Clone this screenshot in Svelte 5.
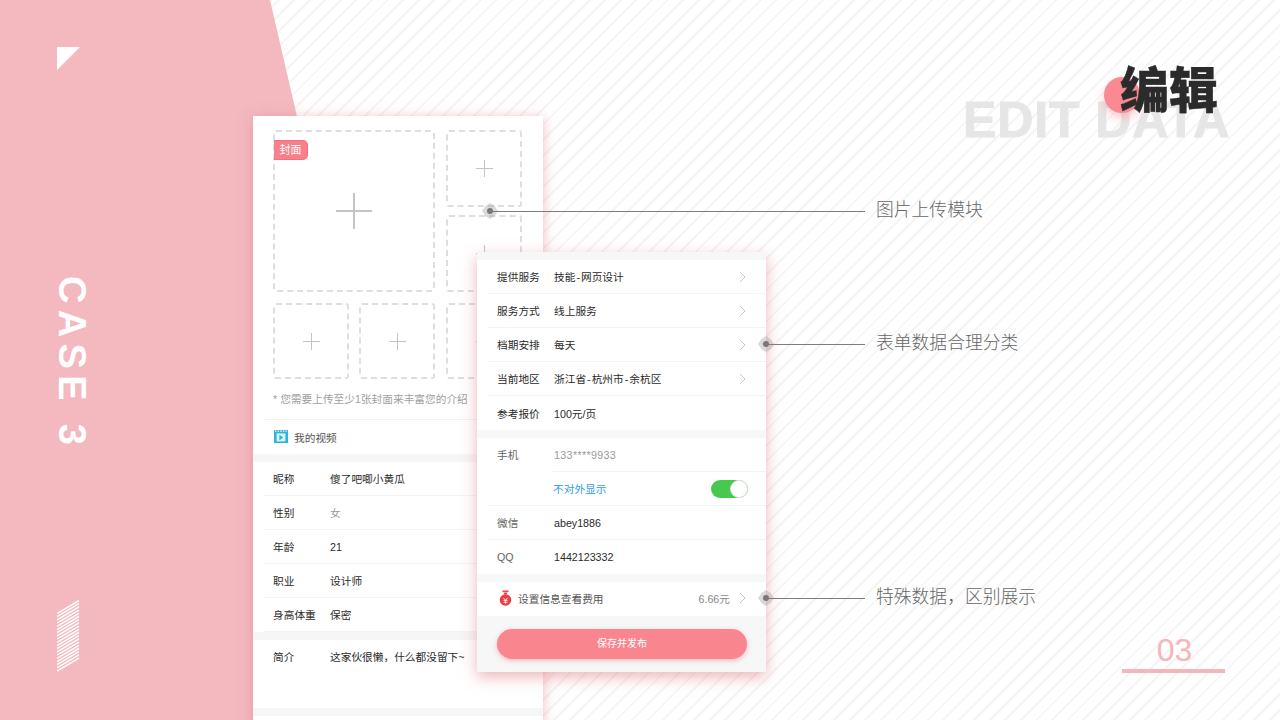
<script lang="ts">
  const uploads = [
    { cls: 'big' },
    { cls: 'side' },
    { cls: 'side' },
    { cls: 'low' },
    { cls: 'low' },
    { cls: 'low side' }
  ];

  const profile = [
    { label: '昵称', value: '傻了吧唧小黄瓜' },
    { label: '性别', value: '女', muted: true },
    { label: '年龄', value: '21' },
    { label: '职业', value: '设计师' },
    { label: '身高体重', value: '保密' }
  ];

  const service = [
    { label: '提供服务', value: '技能-网页设计', arrow: true },
    { label: '服务方式', value: '线上服务', arrow: true },
    { label: '档期安排', value: '每天', arrow: true },
    { label: '当前地区', value: '浙江省-杭州市-余杭区', arrow: true },
    { label: '参考报价', value: '100元/页', arrow: false }
  ];

  // hatch lines of the small block at the bottom left
  const hatch = Array.from({ length: 19 }, (_, i) => 0.5 + i * 3.2);
</script>

{#snippet chevron()}
  <svg class="chevron" width="7" height="12" viewBox="0 0 7 12"><path d="M1 1l5 5-5 5" fill="none" stroke="#c8c8c8" stroke-width="1" /></svg>
{/snippet}

{#snippet pin(x: number, y: number, width: number)}
  <div class="pin" style="left: {x}px; top: {y}px; width: {width}px">
    <svg class="pin-dot" width="18" height="18" viewBox="0 0 18 18">
      <path d="M9 1l4.6 3 3.4 5-3.4 5L9 17l-4.6-3L1 9l3.4-5z" fill="#8c8c8c" opacity=".32" />
      <circle cx="9" cy="9" r="3" fill="#777" />
    </svg>
    <div class="pin-line"></div>
  </div>
{/snippet}

<div class="slide">
  <div class="panel"></div>

  <svg class="corner" width="23" height="23" viewBox="0 0 23 23"><path d="M0 0h23L0 23z" fill="#fff" /></svg>
  <div class="case">CASE 3</div>
  <svg class="hatch" width="23" height="72" viewBox="0 0 23 72">
    {#each hatch as y}
      <path d="M0 {y + 13}L22 {y}" stroke="#fff" stroke-width="1.5" />
    {/each}
  </svg>

  <div class="heading">
    <div class="heading-en">EDIT DATA</div>
    <div class="heading-dot"></div>
    <div class="heading-cn">编辑</div>
  </div>

  <div class="card card-back">
    <div class="upload-grid">
      {#each uploads as u, i}
        <div class="slot {u.cls}">
          {#if i === 0}<span class="badge">封面</span>{/if}
          <span class="plus"></span>
        </div>
      {/each}
    </div>
    <p class="hint">* 您需要上传至少1张封面来丰富您的介绍</p>
    <div class="video-row">
      <svg width="14" height="14" viewBox="0 0 14 14">
        <rect y="0" width="14" height="13" fill="#2fb4d8" />
        <path d="M1 1.2h1.4M3.6 1.2H5M6.2 1.2h1.4M8.8 1.2h1.4M11.4 1.2h1.4" stroke="#fff" stroke-width="1.2" />
        <rect x="2.6" y="3.4" width="8.8" height="8" fill="#d9f4fb" />
        <path d="M5.4 4.8l3.8 2.7-3.8 2.7z" fill="#2fb4d8" />
      </svg>
      <span>我的视频</span>
      <span class="video-more">试看</span>
    </div>
    <div class="band"></div>
    {#each profile as row}
      <div class="row back-row">
        <span class="label">{row.label}</span>
        <span class="value" class:muted={row.muted}>{row.value}</span>
      </div>
    {/each}
    <div class="band"></div>
    <div class="intro">
      <span class="label">简介</span>
      <span class="value">这家伙很懒，什么都没留下~</span>
    </div>
    <div class="band"></div>
  </div>

  <div class="card card-front">
    <div class="group">
      {#each service as row}
        <div class="row front-row">
          <span class="label">{row.label}</span>
          <span class="value">
            {#each row.value.split('-') as part, i}{#if i > 0}<span class="dash">-</span>{/if}{part}{/each}
          </span>
          {#if row.arrow}{@render chevron()}{/if}
        </div>
      {/each}
    </div>
    <div class="group">
      <div class="row front-row inset-line">
        <span class="label soft">手机</span>
        <span class="value phone">133****9933</span>
      </div>
      <div class="row front-row">
        <span class="label"></span>
        <span class="value link">不对外显示</span>
        <span class="toggle"><span class="knob"></span></span>
      </div>
      <div class="row front-row">
        <span class="label soft">微信</span>
        <span class="value">abey1886</span>
      </div>
      <div class="row front-row">
        <span class="label soft">QQ</span>
        <span class="value">1442123332</span>
      </div>
    </div>
    <div class="group fee-row">
      <svg width="13" height="16" viewBox="0 0 13 16">
        <rect x="3.4" y="0.5" width="6.2" height="1.4" fill="#ee3c43" />
        <path d="M4.6 2.4h3.8l-.7 2h-2.4z" fill="#ee3c43" />
        <circle cx="6.5" cy="10" r="5.8" fill="#ee3c43" />
        <path d="M4.4 8l2.1 2.2L8.6 8M4.6 10.6h3.8M4.6 12.3h3.8M6.5 10.2v3.4" fill="none" stroke="#fff" stroke-width=".9" />
      </svg>
      <span class="fee-label">设置信息查看费用</span>
      <span class="fee-amount">6.66元</span>
      {@render chevron()}
    </div>
    <div class="action">
      <div class="publish">保存并发布</div>
    </div>
  </div>

  {@render pin(481, 202, 384)}
  {@render pin(757, 335, 108)}
  {@render pin(757, 589, 108)}

  <div class="note" style="top: 197px">图片上传模块</div>
  <div class="note" style="top: 330px">表单数据合理分类</div>
  <div class="note" style="top: 584px">特殊数据，区别展示</div>

  <div class="page-no">
    <span>03</span>
  </div>
</div>

<style>
  :global(body) {
    margin: 0;
    background: #fff;
  }

  .slide {
    position: relative;
    width: 1280px;
    height: 720px;
    overflow: hidden;
    font-family: "Liberation Sans", "Noto Sans CJK SC", sans-serif;
    background: repeating-linear-gradient(135deg, #fff 0 9px, #f5f5f5 9px 11px);
  }

  .panel {
    position: absolute;
    inset: 0;
    background: #f3b9bf;
    clip-path: polygon(0 0, 270px 0, 437px 720px, 0 720px);
  }

  .corner {
    position: absolute;
    left: 57px;
    top: 47px;
  }

  .case {
    position: absolute;
    left: 51px;
    top: 276px;
    writing-mode: vertical-rl;
    font-size: 38px;
    line-height: 41px;
    font-weight: 700;
    letter-spacing: 6.3px;
    color: #fff;
  }

  .hatch {
    position: absolute;
    left: 57px;
    top: 600px;
  }

  .heading-en {
    position: absolute;
    left: 963px;
    top: 91px;
    font-size: 50px;
    line-height: 58px;
    font-weight: 700;
    letter-spacing: 0.9px;
    color: #e6e6e6;
    -webkit-text-stroke: 1px #e6e6e6;
    white-space: nowrap;
  }

  .heading-dot {
    position: absolute;
    left: 1104px;
    top: 77px;
    width: 36px;
    height: 36px;
    border-radius: 50%;
    background: #f98a93;
    box-shadow: 0 5px 10px rgb(249 138 147 / 0.45);
  }

  .heading-cn {
    position: absolute;
    left: 1120px;
    top: 59px;
    font-size: 49px;
    line-height: 64px;
    font-weight: 900;
    color: #2b2b2b;
    -webkit-text-stroke: 0.4px #2b2b2b;
    white-space: nowrap;
  }

  .card {
    position: absolute;
    display: flex;
    flex-direction: column;
    font-size: 10.7px;
    color: #2a2a2a;
  }

  .card-back {
    left: 253px;
    top: 116px;
    width: 290px;
    height: 620px;
    background: #fff;
    box-shadow: 0 2px 12px rgb(222 120 130 / 0.5);
  }

  .upload-grid {
    display: grid;
    grid-template-columns: 76px 76px 77px;
    grid-template-rows: 77px 77px 79px;
    column-gap: 10px;
    row-gap: 8px;
    margin: 14px 0 0 20px;
  }

  .slot {
    position: relative;
    display: flex;
    align-items: center;
    justify-content: center;
    border: 2px dashed #dedede;
    border-radius: 3px;
    box-sizing: border-box;
  }

  .slot.big {
    grid-column: 1 / 3;
    grid-row: 1 / 3;
  }

  .slot.side {
    grid-column: 3;
    margin-left: 1px;
  }

  .slot.low {
    margin-top: 3px;
  }

  .plus {
    width: 17px;
    height: 17px;
    background:
      linear-gradient(#c4c4c4, #c4c4c4) center / 100% 1px no-repeat,
      linear-gradient(#c4c4c4, #c4c4c4) center / 1px 100% no-repeat;
  }

  .big .plus {
    width: 36px;
    height: 36px;
    background:
      linear-gradient(#c4c4c4, #c4c4c4) center / 100% 2px no-repeat,
      linear-gradient(#c4c4c4, #c4c4c4) center / 2px 100% no-repeat;
  }

  .badge {
    position: absolute;
    left: -1px;
    top: 8px;
    box-sizing: border-box;
    width: 34px;
    height: 20px;
    line-height: 18px;
    text-align: center;
    font-size: 11px;
    color: #fff;
    background: #f8808b;
    border: 1px solid #f56f7b;
    border-left: 0;
    border-radius: 0 5px 5px 0;
  }

  .hint {
    margin: 12px 0 0 20px;
    height: 16px;
    line-height: 16px;
    font-size: 10.7px;
    color: #a0a0a0;
    white-space: nowrap;
  }

  .video-row {
    display: flex;
    align-items: center;
    gap: 6px;
    height: 35px;
    box-sizing: border-box;
    margin-top: 12px;
    margin-left: 10px;
    padding-left: 11px;
    border-top: 1px solid #f2f2f2;
    color: #555;
    white-space: nowrap;
  }

  .video-more {
    margin-left: 137px;
    color: #999;
  }

  .band {
    flex: none;
    height: 8px;
    background: #f6f6f6;
  }

  .row {
    display: flex;
    align-items: center;
    box-sizing: border-box;
    height: 34px;
    white-space: nowrap;
  }

  .back-row {
    margin-left: 10px;
    padding-left: 10px;
    border-bottom: 1px solid #f4f4f4;
  }

  .back-row .label,
  .intro .label {
    width: 57px;
  }

  .muted {
    color: #999;
  }

  .intro {
    display: flex;
    height: 68px;
    padding: 10px 0 0 20px;
    box-sizing: border-box;
    line-height: 14px;
    white-space: nowrap;
  }

  .card-front {
    left: 477px;
    top: 252px;
    width: 289px;
    height: 420px;
    background: #f7f7f7;
    box-shadow: 0 5px 14px rgb(222 120 130 / 0.55);
  }

  .group {
    margin-top: 8px;
    background: #fff;
  }

  .front-row {
    margin-left: 11px;
    padding-left: 9px;
    padding-right: 20px;
    border-bottom: 1px solid #f3f3f3;
  }

  .group .front-row:last-child {
    border-bottom: 0;
  }

  .front-row.inset-line {
    position: relative;
    border-bottom-color: #fff;
  }

  .inset-line::after {
    content: "";
    position: absolute;
    left: 65px;
    right: 0;
    bottom: -1px;
    height: 1px;
    background: #f3f3f3;
  }

  .front-row .label {
    width: 57px;
    flex: none;
  }

  .front-row .value {
    flex: 1;
  }

  .dash {
    padding: 0 1px;
  }

  .soft {
    color: #666;
  }

  .phone {
    color: #999;
    letter-spacing: 0.35px;
  }

  .link {
    margin-left: -1px;
    color: #2c9ae6;
  }

  .toggle {
    position: relative;
    width: 37px;
    height: 18px;
    margin-right: -2px;
    border-radius: 9px;
    background: #47c94f;
  }

  .knob {
    position: absolute;
    right: 0;
    top: 0;
    width: 18px;
    height: 18px;
    box-sizing: border-box;
    border-radius: 50%;
    background: #fff;
    border: 1px solid #e4e4e4;
  }

  .chevron {
    flex: none;
  }

  .fee-row {
    display: flex;
    align-items: center;
    box-sizing: border-box;
    height: 34px;
    padding: 0 20px 2px 22px;
    white-space: nowrap;
  }

  .fee-label {
    flex: 1;
    margin-left: 6px;
    color: #555;
  }

  .fee-amount {
    margin-right: 9px;
    color: #888;
  }

  .action {
    padding: 13px 19px 0 20px;
  }

  .publish {
    height: 30px;
    line-height: 30px;
    text-align: center;
    font-size: 10px;
    color: #fff;
    background: #f9868f;
    border-radius: 15px;
    box-shadow: 0 2px 5px rgb(240 120 130 / 0.45);
  }

  .pin {
    position: absolute;
    display: flex;
    align-items: center;
    height: 18px;
  }

  .pin-dot {
    flex: none;
  }

  .pin-line {
    flex: 1;
    height: 1px;
    margin-left: -9px;
    background: #7d7d7d;
  }

  .note {
    position: absolute;
    left: 876px;
    font-size: 17.8px;
    line-height: 26px;
    font-weight: 300;
    color: #666;
    white-space: nowrap;
  }

  .page-no {
    position: absolute;
    left: 1122px;
    top: 631px;
    width: 103px;
    height: 42px;
    box-sizing: border-box;
    border-bottom: 4px solid #f5b5ba;
    padding-left: 2px;
    text-align: center;
    font-size: 32px;
    line-height: 38px;
    color: #f5b5ba;
  }
</style>
